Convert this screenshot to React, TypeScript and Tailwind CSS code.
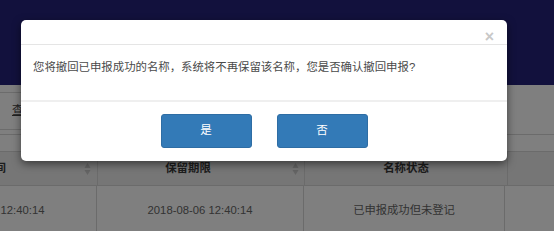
import React from "react";

const font = { fontFamily: '"Liberation Sans", "Noto Sans CJK SC", sans-serif' };

function SortIcon() {
  return (
    <svg width="7" height="14" viewBox="0 0 7 14" className="shrink-0">
      <path d="M3.5 1 L6.5 6 L0.5 6 Z" fill="#c8c8c8" />
      <path d="M3.5 13 L6.5 8 L0.5 8 Z" fill="#c8c8c8" />
    </svg>
  );
}

export default function App() {
  return (
    <div className="relative w-[554px] h-[231px] overflow-hidden bg-white" style={font}>
      {/* page */}
      <div className="h-[85px] bg-[#24227a]" />
      <div className="h-[50px] border-b border-[#d6d6d6] flex items-start">
        <div className="mt-[7px] ml-[-20px] w-[100px] h-[38px] border-y border-[#d9d9d9] flex items-center pl-[32px] text-[11.5px] text-[#444] underline">
          查询
        </div>
      </div>
      <div className="h-[17px] border-b border-[#d6d6d6]" />
      <div className="ml-[-112px] flex flex-col">
        <div className="flex h-[34px] bg-[#ececec] border-b border-[#d6d6d6] text-[11.4px] font-bold text-[#3a3a3a]">
          <div className="w-[210px] flex items-center border-r border-[#d6d6d6] pr-[6px]">
            <span className="flex-1 text-center pr-[6px]">申报时间</span>
            <SortIcon />
          </div>
          <div className="w-[207px] flex items-center border-r border-[#d6d6d6] pr-[5px]">
            <span className="flex-1 text-center pr-[14px]">保留期限</span>
            <SortIcon />
          </div>
          <div className="w-[203px] flex items-center justify-center border-r border-[#d6d6d6]">
            名称状态
          </div>
          <div className="flex-1" />
        </div>
        <div className="flex h-[50px] text-[11.3px] text-[#666] border-b border-[#d6d6d6]">
          <div className="w-[209px] flex items-center justify-center border-r border-[#d6d6d6]">
            2018-08-06 12:40:14
          </div>
          <div className="w-[207px] flex items-center justify-center border-r border-[#d6d6d6]">
            2018-08-06 12:40:14
          </div>
          <div className="w-[201px] flex items-center justify-center border-r border-[#d6d6d6]">
            已申报成功但未登记
          </div>
          <div className="flex-1" />
        </div>
      </div>

      {/* overlay */}
      <div className="absolute inset-0 bg-black/50" />

      {/* modal */}
      <div className="absolute left-[21px] top-[20px] w-[486px] bg-white rounded-[5px] shadow-[0_3px_9px_rgba(0,0,0,0.5)]">
        <div className="relative h-[25px] border-b border-[#e5e5e5]">
          <span className="absolute right-[13px] top-[9px] text-[16px] leading-none font-bold text-[#c8c8c8]">
            ×
          </span>
        </div>
        <div className="h-[55px] pt-[14px] pl-[12px] text-[11.4px] leading-[16px] text-[#4a4a4a]">
          您将撤回已申报成功的名称，系统将不再保留该名称，您是否确认撤回申报?
        </div>
        <div className="border-t-2 border-[#efefef] pt-[12px] pb-[13px] flex justify-center gap-[25px]">
          <button className="w-[91px] h-[34px] rounded-[3px] bg-[#337ab7] text-white text-[11.5px] border border-[#2e6da4]">
            是
          </button>
          <button className="w-[91px] h-[34px] rounded-[3px] bg-[#337ab7] text-white text-[11.5px] border border-[#2e6da4]">
            否
          </button>
        </div>
      </div>
    </div>
  );
}
